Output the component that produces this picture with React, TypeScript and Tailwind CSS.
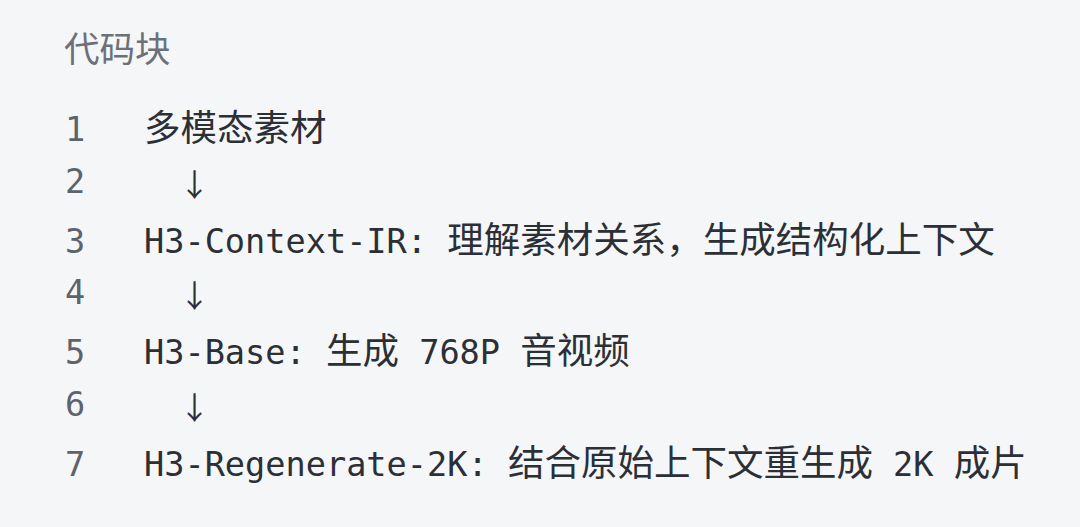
const mono = "font-['DejaVu_Sans_Mono','Noto_Sans_CJK_SC',monospace] text-[33.6px]";
const cjk = "font-['Noto_Sans_CJK_SC',sans-serif] text-[36.5px]";

// each line: list of segments, c = CJK text, a = arrow
type Seg = { t: string; c?: boolean; a?: boolean };

const arrow: Seg[] = [{ t: '  ' }, { t: '↓', a: true }];

const lines: Seg[][] = [
  [{ t: '多模态素材', c: true }],
  arrow,
  [{ t: 'H3-Context-IR: ' }, { t: '理解素材关系，生成结构化上下文', c: true }],
  arrow,
  [{ t: 'H3-Base: ' }, { t: '生成', c: true }, { t: ' 768P ' }, { t: '音视频', c: true }],
  arrow,
  [{ t: 'H3-Regenerate-2K: ' }, { t: '结合原始上下文重生成', c: true }, { t: ' 2K ' }, { t: '成片', c: true }],
];

export default function App() {
  return (
    <div className="w-[1080px] h-[527px] bg-[#f5f6f8] pl-[64px] pt-[26px] overflow-hidden">
      <div className="font-['Noto_Sans_CJK_SC',sans-serif] text-[35.5px] leading-[42px] text-[#6c7179]">
        代码块
      </div>
      <div className="mt-[30px]">
        {lines.map((segs, i) => (
          <div key={i} className={`${mono} h-[55.8px] leading-[55.8px] whitespace-pre text-[#2b2f36]`}>
            <span className="inline-block w-[80px] pl-[1px] text-[#5d636b]">{i + 1}</span>
            {segs.map((s, j) =>
              s.a ? (
                <span
                  key={j}
                  className="inline-flex justify-center w-[20px] align-[-3px] font-['Noto_Sans_CJK_SC',sans-serif] text-[31px]"
                >
                  {s.t}
                </span>
              ) : (
                <span key={j} className={s.c ? cjk : mono}>
                  {s.t}
                </span>
              )
            )}
          </div>
        ))}
      </div>
    </div>
  );
}
